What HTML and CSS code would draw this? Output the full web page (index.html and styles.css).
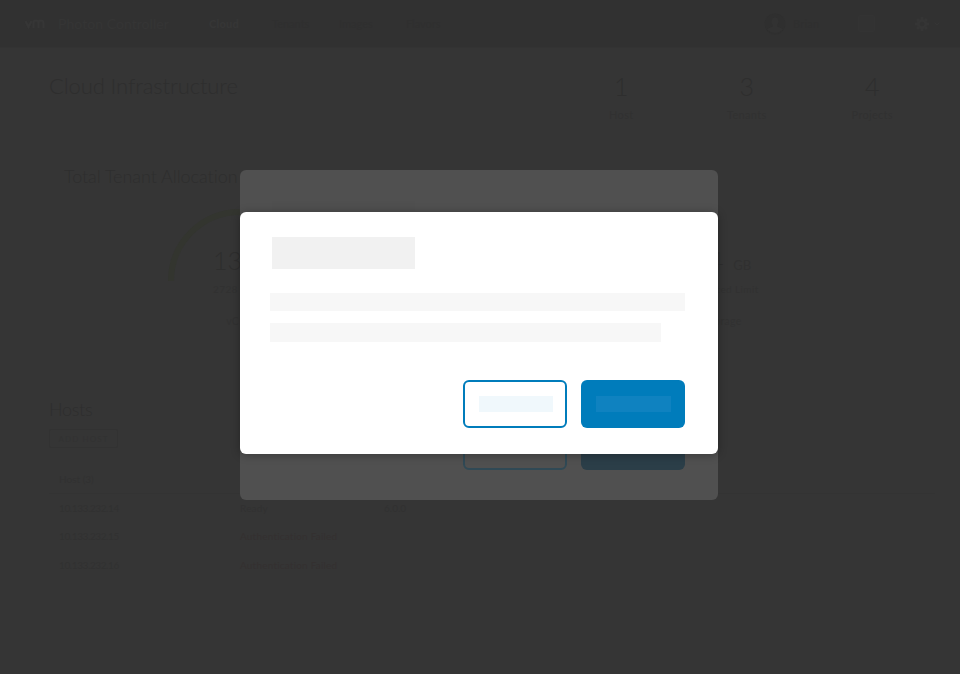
FILE: index.html
```html
<!DOCTYPE html>
<html lang="en">
<head>
<meta charset="utf-8">
<title>Photon Controller</title>
<link rel="stylesheet" href="styles.css">
</head>
<body>
<header class="topbar">
  <svg class="logo" viewBox="0 0 22 10"><path d="M1.5 2 4.5 8 7.5 2M9.500 9V4Q9.500 1.500 12 1.500T14.500 4V9M14.500 4Q14.500 1.500 17 1.500T19.500 4V9"/></svg>
  <span class="brand">Photon Controller</span>
  <nav class="nav"><a class="active">Cloud</a><a>Tenants</a><a>Images</a><a>Flavors</a></nav>
  <div class="tools">
    <svg class="avatar" viewBox="0 0 22 22"><circle cx="11" cy="11" r="10.500"/><path d="M11 4.500a3.500 4 0 0 1 3.500 4c0 2-1 3-1.500 3.500v1.500l4 1.500q2 1 1.500 2Q11 23 3.500 17q-.5-1 1.500-2l4-1.500V12Q7.500 11 7.500 8.500a3.500 4 0 0 1 3.500-4Z"/></svg>
    <span class="user">Brian</span>
    <span class="square"></span>
    <svg class="gear" viewBox="0 0 14 14"><circle cx="7" cy="7" r="3.800"/><path d="M7 0v3M7 11v3M0 7h3M11 7h3M2 2l2 2M10 10l2 2M2 12l2-2M10 4l2-2"/></svg>
    <svg class="chevron" viewBox="0 0 6 4"><path d="m.5.5 2.500 2.500L5.500.5"/></svg>
  </div>
</header>
<main class="content">
  <section class="summary">
    <h1>Cloud Infrastructure</h1>
    <dl class="stats">
      <div><dd>1</dd><dt>Host</dt></div>
      <div><dd>3</dd><dt>Tenants</dt></div>
      <div><dd>4</dd><dt>Projects</dt></div>
    </dl>
  </section>
  <section class="allocation">
    <h2>Total Tenant Allocation</h2>
    <div class="gauges">
      <div class="gauge">
        <svg class="arc" viewBox="0 0 146 74"><path d="M4 72a69 69 0 0 1 138 0"/></svg>
        <div class="value">136</div><div class="limit">2728</div><div class="kind">vCPU</div>
      </div>
      <div class="gauge storage">
        <div class="value">4 <small>GB</small></div><div class="limit">Allocated Limit</div><div class="kind">Storage</div>
      </div>
    </div>
  </section>
  <section class="hosts">
    <h2>Hosts</h2>
    <button class="add">ADD HOST</button>
    <div class="table">
      <div class="row head"><span>Host (3)</span></div>
      <div class="row"><span>10.133.232.14</span><span>Ready</span><span>6.0.0</span></div>
      <div class="row failed"><span>10.133.232.15</span><span>Authentication Failed</span></div>
      <div class="row failed"><span>10.133.232.16</span><span>Authentication Failed</span></div>
    </div>
  </section>
</main>
<div class="modal back">
  <div class="title"></div>
  <div class="actions"><span class="btn outline"></span><span class="btn solid"></span></div>
</div>
<div class="modal front">
  <div class="title"></div>
  <div class="line"></div>
  <div class="line short"></div>
  <div class="actions"><span class="btn outline"><i></i></span><span class="btn solid"><i></i></span></div>
</div>
</body>
</html>
```
FILE: styles.css
```css
* { box-sizing: border-box; }
body {
  margin: 0;
  position: relative;
  width: 960px;
  height: 674px;
  overflow: hidden;
  background: #353535;
  color: #2e2e2e;
  font-family: Lato, "Open Sans", sans-serif;
}
h1, h2, dl, dd, dt { margin: 0; font-weight: 300; }
svg { display: block; flex: none; fill: none; stroke: #363636; }

.topbar { display: flex; align-items: center; height: 48px; padding-left: 24px; background: #313131; border-bottom: 1px solid #333; }
.logo { width: 22px; height: 10px; stroke-width: 2.2; }
.brand { width: 151px; margin-left: 12px; color: #353535; font-size: 14px; letter-spacing: .05px; white-space: nowrap; }
.nav { display: flex; font-size: 11px; color: #2f2f2f; }
.nav a { width: 67px; }
.nav a:first-child { width: 63px; }
.nav .active { color: #363636; font-weight: 900; letter-spacing: .2px; }
.tools { display: flex; align-items: center; margin-left: auto; padding-right: 19px; }
.avatar { width: 22px; height: 22px; fill: #2f2f2f; stroke: none; }
.avatar path { fill: #323232; }
.user { width: 65px; margin-left: 7px; color: #2f2f2f; font-size: 11px; letter-spacing: .2px; }
.square { width: 17px; height: 17px; background: #323232; border: 1px solid #333; border-radius: 2px; }
.gear { width: 14px; height: 14px; margin-left: 40px; stroke-width: 3; stroke: #353535; }
.chevron { width: 6px; height: 4px; margin: 0 1px 0 5px; stroke: #353535; }

.content { padding: 24px 25px 0 49px; }
.summary { display: flex; justify-content: space-between; height: 80px; }
h1 { font-size: 22px; line-height: 28px; letter-spacing: -.1px; white-space: nowrap; }
.stats { display: flex; }
.stats div { width: 125.500px; text-align: center; }
.stats dd { font-size: 25px; line-height: 28px; }
.stats dt { margin-top: 7px; font-size: 11px; line-height: 16px; font-weight: 400; color: #313131; letter-spacing: .3px; }

.allocation { height: 245px; padding: 12px 0 0 15px; }
.allocation h2 { font-size: 18px; line-height: 24px; letter-spacing: -.05px; white-space: nowrap; }
.gauges { display: flex; gap: 335px; padding: 21px 0 0 103px; }
.gauge { width: 146px; flex: none; text-align: center; }
.arc { width: 146px; height: 74px; margin-bottom: -38px; stroke: #33352f; stroke-width: 6; }
.value { height: 30px; font-size: 25px; line-height: 30px; font-weight: 300; }
.gauge:first-child .value, .gauge:first-child .limit { padding-left: 46px; text-align: left; }
.value small { font-size: 13px; font-weight: 400; margin-left: 3px; color: #303030; }
.limit { margin-top: 7px; font-size: 10px; line-height: 14px; letter-spacing: .4px; color: #313131; }
.kind { margin-top: 17px; font-size: 10.500px; line-height: 16px; letter-spacing: .3px; color: #313131; }
.storage { padding: 36px 0 0 4px; }
.storage .value { padding-left: 14px; }

.hosts h2 { font-size: 18px; line-height: 24px; letter-spacing: -.3px; }
.add { display: block; width: 69px; height: 19px; margin-top: 8px; padding: 0; background: none; border: 1px solid #323232; border-radius: 2px; color: #323232; font: 8px Lato, sans-serif; letter-spacing: 1.1px; }
.table { padding-top: 17px; font-size: 10px; color: #313131; }
.row { display: grid; grid-template-columns: 181px 144px 1fr; height: 28.500px; padding-left: 10px; align-items: center; }
.row span:first-child { letter-spacing: -.4px; }
.row span:nth-child(2) { letter-spacing: .2px; }
.row.head { border-bottom: 1px solid #333; }
.row.head span:first-child { letter-spacing: 0; }
.row.failed span:last-child { color: #343030; }

.modal { position: absolute; left: 240px; width: 478px; border-radius: 6px; }
.back { top: 170px; height: 330px; padding: 31px 33px 0 32px; background: #505050; }
.front { top: 212px; height: 242px; padding: 25px 33px 0 32px; background: #fff; box-shadow: 0 1px 10px rgba(0, 0, 0, .3); }
.title { width: 143px; height: 32px; background: #f1f1f1; }
.back .title { margin-bottom: 189px; background: #4f4f4f; }
.line { width: 415px; height: 18px; margin: 24px 0 0 -2px; background: #f7f7f7; }
.line.short { width: 391px; height: 19px; margin-top: 12px; }
.actions { display: flex; justify-content: flex-end; gap: 14px; }
.front .actions { margin-top: 38px; }
.btn { display: flex; align-items: center; justify-content: center; width: 104px; height: 47.500px; border-radius: 6px; }
.outline { border: 2px solid #007cbb; }
.solid { background: #007cbb; }
.btn i { width: 74px; height: 16px; background: #f0f8fc; }
.outline i { margin-left: 2px; }
.solid i { width: 75px; background: #0f82c0; }
.back .outline { border-color: #304955; }
.back .solid { background: #2b3e48; }
```
